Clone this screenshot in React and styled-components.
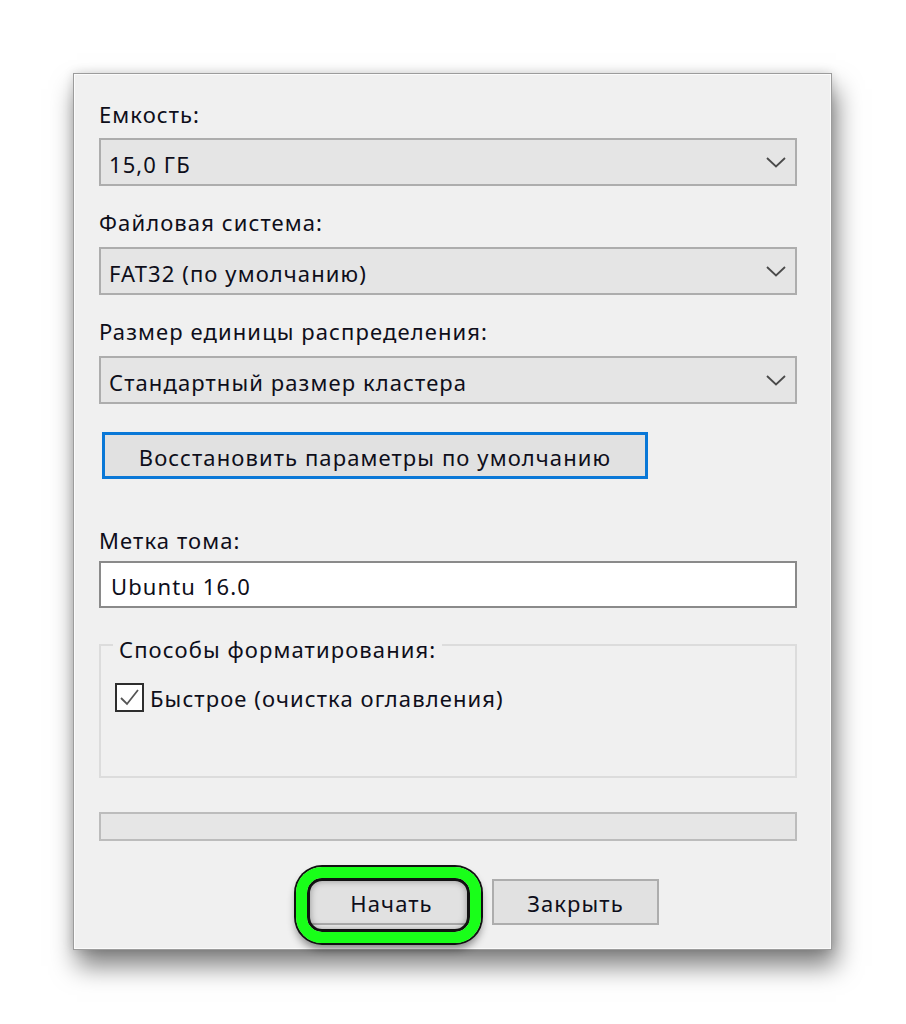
import React from 'react';
import styled, { createGlobalStyle } from 'styled-components';

const GlobalStyle = createGlobalStyle`
  body {
    margin: 0;
    background: #ffffff;
    font-family: "Noto Sans", "Open Sans", sans-serif;
    color: #0e0e1a;
  }
`;

const textStyle = `
  font-size: 22px;
  line-height: 24px;
  letter-spacing: 1.1px;
`;

const Page = styled.div`
  box-sizing: border-box;
  min-height: 1024px;
  padding: 73px 0 0 73px;
`;

const Window = styled.div`
  box-sizing: border-box;
  width: 759px;
  height: 877px;
  background: #f0f0f0;
  border: 1px solid #9c9c9c;
  box-shadow: inset 0 0 0 1px #fbfbfb, 4px 16px 24px rgba(0, 0, 0, 0.5),
    0 0 10px rgba(0, 0, 0, 0.14);
  padding: 28px 34px 0 25px;
  display: flex;
  flex-direction: column;
`;

const Label = styled.div`
  ${textStyle}
  margin-top: ${(p) => p.$top || 0}px;
`;

const Combo = styled.div`
  ${textStyle}
  box-sizing: border-box;
  height: 48px;
  margin-top: ${(p) => p.$top || 0}px;
  border: 2px solid #adadad;
  background: #e5e5e5;
  display: flex;
  align-items: center;
  justify-content: space-between;
  padding: 3px 9px 0 8px;
`;

const Chevron = () => (
  <svg width="20" height="11" viewBox="0 0 20 11" style={{ marginTop: -3 }}>
    <path d="M1 1 L10 9.5 L19 1" fill="none" stroke="#4a4a4a" strokeWidth="1.8" />
  </svg>
);

const RestoreButton = styled.button`
  ${textStyle}
  box-sizing: border-box;
  align-self: flex-start;
  width: 546px;
  height: 47px;
  margin: 28px 0 0 3px;
  border: 3px solid #0a78d7;
  background: #e1e1e1;
  font-family: inherit;
  color: inherit;
  padding: 2px 0 0;
`;

const TextInput = styled.div`
  ${textStyle}
  box-sizing: border-box;
  height: 47px;
  margin-top: 9px;
  border: 2px solid #8a8a8a;
  background: #ffffff;
  display: flex;
  align-items: center;
  padding: 2px 10px 0;
`;

const Group = styled.fieldset`
  box-sizing: border-box;
  height: 149px;
  margin: 21px 0 0;
  padding: 0 12px;
  border: 2px solid #dcdcdc;
  min-width: 0;
`;

const Legend = styled.legend`
  ${textStyle}
  padding: 8px 6px 0;
`;

const CheckRow = styled.label`
  ${textStyle}
  display: flex;
  align-items: center;
  gap: 6px;
  margin: 22px 0 0 2px;
`;

const CheckBox = styled.span`
  box-sizing: border-box;
  width: 29px;
  height: 29px;
  border: 2px solid #2e2e2e;
  background: #fff;
  display: flex;
  align-items: center;
  justify-content: center;
`;

const Progress = styled.div`
  box-sizing: border-box;
  height: 29px;
  margin-top: 34px;
  border: 2px solid #bcbcbc;
  background: #e6e6e6;
`;

const ButtonRow = styled.div`
  display: flex;
  gap: 17px;
  margin: 38px 0 0 209px;
`;

const Highlighted = styled.div`
  position: relative;
`;

const Button = styled.button`
  ${textStyle}
  box-sizing: border-box;
  width: 167px;
  height: 46px;
  border: 2px solid #adadad;
  background: #e1e1e1;
  font-family: inherit;
  color: inherit;
  padding: 2px 0 0;
`;

const Ring = styled.div`
  position: absolute;
  left: -12px;
  top: -12px;
  right: -6px;
  bottom: -18px;
  border: 11px solid #19ff19;
  border-radius: 26px;
  box-shadow: 0 0 0 2px #111, inset 0 0 0 3px #111,
    inset 0 0 7px 3px rgba(0, 0, 0, 0.35), 0 6px 9px rgba(0, 0, 0, 0.45);
  pointer-events: none;
`;

const App = () => (
  <>
    <GlobalStyle />
    <Page>
      <Window>
        <Label>Емкость:</Label>
        <Combo $top={12}>
          <span>15,0 ГБ</span>
          <Chevron />
        </Combo>

        <Label $top={24}>Файловая система:</Label>
        <Combo $top={13}>
          <span>FAT32 (по умолчанию)</span>
          <Chevron />
        </Combo>

        <Label $top={24}>Размер единицы распределения:</Label>
        <Combo $top={13}>
          <span>Стандартный размер кластера</span>
          <Chevron />
        </Combo>

        <RestoreButton>Восстановить параметры по умолчанию</RestoreButton>

        <Label $top={49}>Метка тома:</Label>
        <TextInput>Ubuntu 16.0</TextInput>

        <Group>
          <Legend>Способы форматирования:</Legend>
          <CheckRow>
            <CheckBox>
              <svg width="23" height="23" viewBox="0 0 23 23">
                <path d="M3 12 L9 18 L20 4" fill="none" stroke="#555" strokeWidth="1.8" />
              </svg>
            </CheckBox>
            Быстрое (очистка оглавления)
          </CheckRow>
        </Group>

        <Progress />

        <ButtonRow>
          <Highlighted>
            <Button>Начать</Button>
            <Ring />
          </Highlighted>
          <Button>Закрыть</Button>
        </ButtonRow>
      </Window>
    </Page>
  </>
);

export default App;
